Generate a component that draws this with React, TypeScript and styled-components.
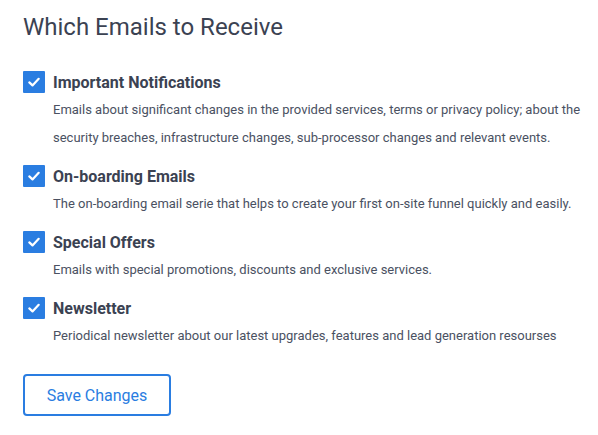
import styled, { createGlobalStyle } from 'styled-components';

const GlobalStyle = createGlobalStyle`
  html, body {
    margin: 0;
    padding: 0;
    background: #fff;
  }
  body {
    font-family: Roboto, "Liberation Sans", sans-serif;
  }
`;

const options = [
  {
    title: 'Important Notifications',
    text: 'Emails about significant changes in the provided services, terms or privacy policy; about the security breaches, infrastructure changes, sub-processor changes and relevant events.',
  },
  {
    title: 'On-boarding Emails',
    text: 'The on-boarding email serie that helps to create your first on-site funnel quickly and easily.',
  },
  {
    title: 'Special Offers',
    text: 'Emails with special promotions, discounts and exclusive services.',
  },
  {
    title: 'Newsletter',
    text: 'Periodical newsletter about our latest upgrades, features and lead generation resourses',
  },
];

const App = () => {
  return (
    <>
      <GlobalStyle />
      <S.Page>
        <S.Heading>Which Emails to Receive</S.Heading>
        <S.List>
          {options.map((o) => (
            <S.Item key={o.title}>
              <S.ItemHead>
                <S.Box>
                  <svg width="14" height="14" viewBox="0 0 14 14" fill="none">
                    <path d="M2.3 7.4 L5.5 10.4 L11.7 3.8" stroke="#fff" strokeWidth="2.2" strokeLinecap="round" strokeLinejoin="round" />
                  </svg>
                </S.Box>
                <S.ItemTitle>{o.title}</S.ItemTitle>
              </S.ItemHead>
              <S.Desc>{o.text}</S.Desc>
            </S.Item>
          ))}
        </S.List>
        <S.SaveButton type="button">Save Changes</S.SaveButton>
      </S.Page>
    </>
  );
};

const S = {
  Page: styled.div`
    padding: 12px 10px 0 23px;
  `,
  Heading: styled.h2`
    margin: 0 0 29px;
    font-size: 24px;
    font-weight: 400;
    line-height: 30px;
    color: #3b4252;
  `,
  List: styled.div`
    display: flex;
    flex-direction: column;
    gap: 13px;
  `,
  Item: styled.div`
    display: flex;
    flex-direction: column;
  `,
  ItemHead: styled.div`
    display: flex;
    align-items: center;
    gap: 8px;
    height: 22px;
  `,
  Box: styled.span`
    display: flex;
    align-items: center;
    justify-content: center;
    width: 22px;
    height: 22px;
    background: #2a7de1;
    border-radius: 1px;
    flex-shrink: 0;
  `,
  ItemTitle: styled.span`
    font-size: 16px;
    font-weight: 700;
    color: #3b4252;
  `,
  Desc: styled.p`
    margin: 3px 0 0 30px;
    font-size: 13px;
    line-height: 28px;
    color: #4a5162;
  `,
  SaveButton: styled.button`
    margin-top: 24px;
    width: 148px;
    height: 42px;
    border: 2px solid #2a7de1;
    border-radius: 4px;
    background: #fff;
    color: #2a7de1;
    font-family: Roboto, "Liberation Sans", sans-serif;
    font-size: 16px;
    cursor: pointer;
  `,
};

export default App;
